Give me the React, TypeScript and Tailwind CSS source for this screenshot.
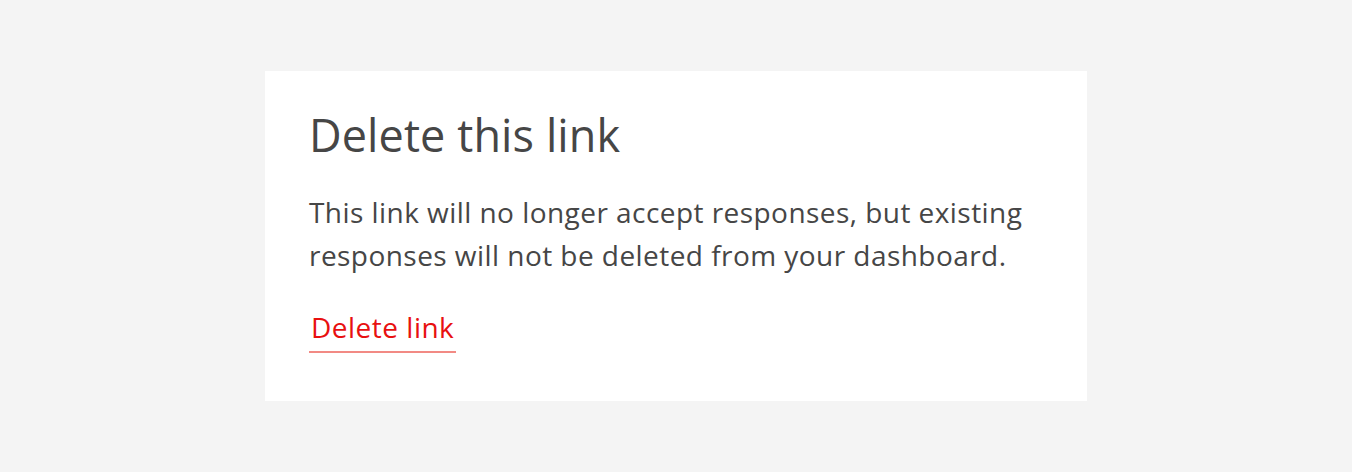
import React from 'react'

export default function App() {
  return (
    <div className="flex h-[472px] w-full items-center justify-center bg-[#f4f4f4] font-['Open_Sans',sans-serif]">
      <div className="h-[330px] w-[822px] bg-white px-[44px] pt-[36px]">
        <h1 className="text-[45px] leading-[56px] font-normal tracking-[0.1px] text-[#464646]">Delete this link</h1>
        <p className="mt-[28px] text-[28px] leading-[43px] tracking-[0.45px] text-[#464646]">
          This link will no longer accept responses, but existing responses will not be deleted from your dashboard.
        </p>
        <div className="mt-[33px]">
          <a
            href="#"
            className="inline-block border-b-2 border-[#f28a84] px-[2px] pb-[7px] text-[28px] leading-[34px] tracking-[0.5px] text-[#e81010]"
          >
            Delete link
          </a>
        </div>
      </div>
    </div>
  )
}
